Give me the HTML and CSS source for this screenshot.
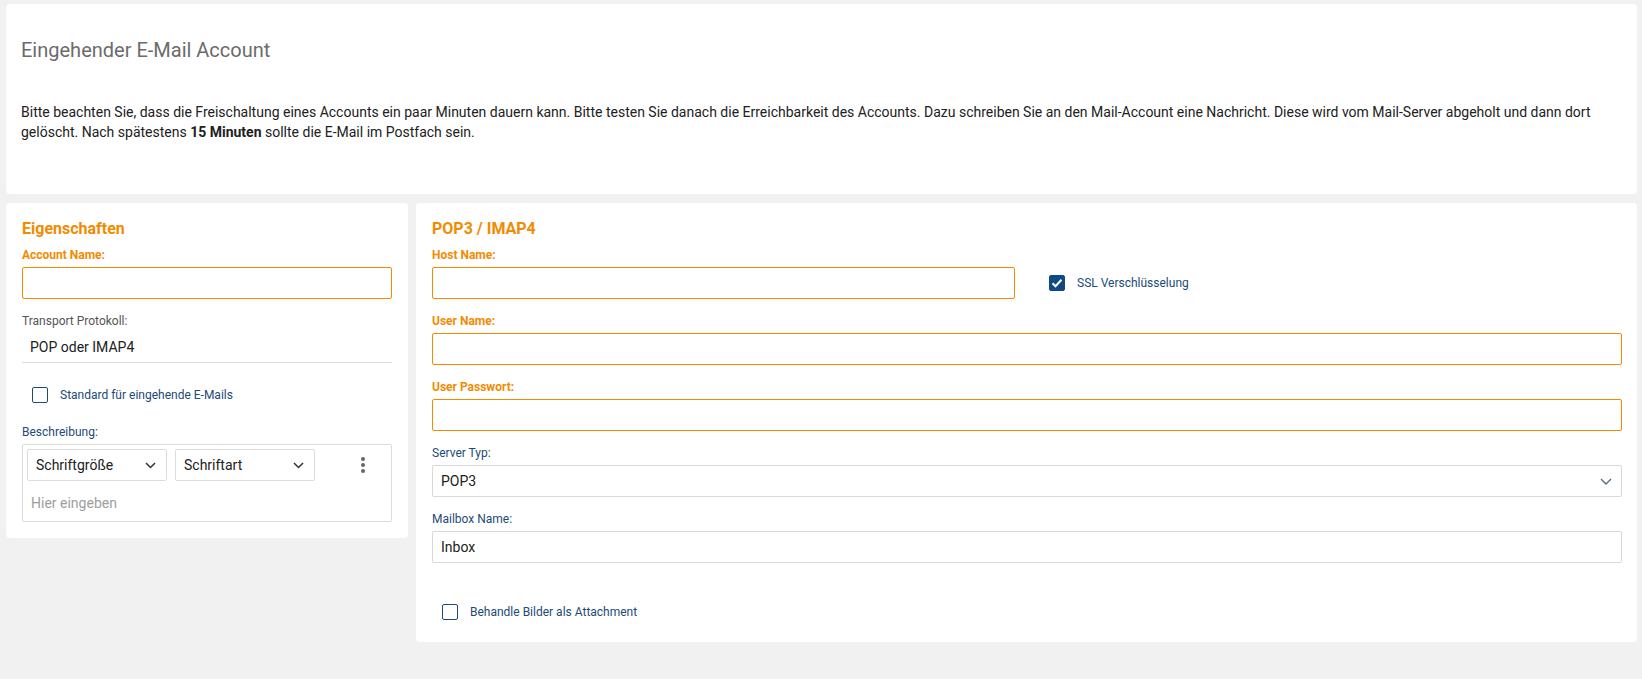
FILE: index.html
```html
<!DOCTYPE html>
<html lang="de">
<head>
<meta charset="utf-8">
<title>Eingehender E-Mail Account</title>
<link rel="stylesheet" href="styles.css">
</head>
<body>
<div class="page">
  <section class="card intro">
    <h1 class="intro-title">Eingehender E-Mail Account</h1>
    <p class="intro-text">Bitte beachten Sie, dass die Freischaltung eines Accounts ein paar Minuten dauern kann. Bitte testen Sie danach die Erreichbarkeit des Accounts. Dazu schreiben Sie an den Mail-Account eine Nachricht. Diese wird vom Mail-Server abgeholt und dann dort gelöscht. Nach spätestens <strong>15 Minuten</strong> sollte die E-Mail im Postfach sein.</p>
  </section>

  <div class="row">
    <section class="card panel panel-left">
      <h2 class="panel-title">Eigenschaften</h2>
      <div class="field">
        <label class="label label-req">Account Name:</label>
        <div class="input input-req"></div>
      </div>
      <div class="field field-static">
        <label class="label label-gray">Transport Protokoll:</label>
        <div class="static-value">POP oder IMAP4</div>
      </div>
      <div class="check-row check-row-left">
        <span class="checkbox"></span>
        <span class="check-label">Standard für eingehende E-Mails</span>
      </div>
      <div class="field field-desc">
        <label class="label label-blue">Beschreibung:</label>
        <div class="editor">
          <div class="editor-toolbar">
            <div class="mini-select"><span>Schriftgröße</span>
              <svg class="chev" width="11" height="7" viewBox="0 0 11 7"><path d="M1 1l4.5 4.5L10 1" fill="none" stroke="#333" stroke-width="1.5"/></svg>
            </div>
            <div class="mini-select"><span>Schriftart</span>
              <svg class="chev" width="11" height="7" viewBox="0 0 11 7"><path d="M1 1l4.5 4.5L10 1" fill="none" stroke="#333" stroke-width="1.5"/></svg>
            </div>
            <div class="more">
              <svg width="4" height="16" viewBox="0 0 4 16"><circle cx="2" cy="2" r="2" fill="#666"/><circle cx="2" cy="8" r="2" fill="#666"/><circle cx="2" cy="14" r="2" fill="#666"/></svg>
            </div>
          </div>
          <div class="editor-body">Hier eingeben</div>
        </div>
      </div>
    </section>

    <section class="card panel panel-right">
      <h2 class="panel-title">POP3 / IMAP4</h2>
      <div class="host-row">
        <div class="field field-host">
          <label class="label label-req">Host Name:</label>
          <div class="input input-req"></div>
        </div>
        <div class="ssl">
          <span class="checkbox checked">
            <svg width="12" height="10" viewBox="0 0 12 10"><path d="M1.5 5.2l3 3L10.5 1.8" fill="none" stroke="#fff" stroke-width="2"/></svg>
          </span>
          <span class="check-label">SSL Verschlüsselung</span>
        </div>
      </div>
      <div class="field">
        <label class="label label-req">User Name:</label>
        <div class="input input-req"></div>
      </div>
      <div class="field">
        <label class="label label-req">User Passwort:</label>
        <div class="input input-req"></div>
      </div>
      <div class="field">
        <label class="label label-blue">Server Typ:</label>
        <div class="input select"><span>POP3</span>
          <svg width="12" height="7" viewBox="0 0 12 7"><path d="M1 1l5 5 5-5" fill="none" stroke="#5b6b7e" stroke-width="1.4"/></svg>
        </div>
      </div>
      <div class="field field-last">
        <label class="label label-blue">Mailbox Name:</label>
        <div class="input">Inbox</div>
      </div>
      <div class="check-row check-row-right">
        <span class="checkbox"></span>
        <span class="check-label">Behandle Bilder als Attachment</span>
      </div>
    </section>
  </div>
</div>
</body>
</html>
```

FILE: styles.css
```css
* { box-sizing: border-box; }

html, body {
  margin: 0;
  padding: 0;
  background: #f1f1f1;
  font-family: Roboto, "Liberation Sans", Arial, sans-serif;
  color: #212121;
}

.page {
  padding: 4px 5px 0 6px;
}

.card {
  background: #fff;
  border-radius: 4px;
}

.intro {
  padding: 34px 16px 52px 15px;
}

.intro-title {
  margin: 0;
  font-size: 20px;
  line-height: 24px;
  font-weight: 400;
  color: #6b6b6b;
}

.intro-text {
  margin: 40px 0 0;
  font-size: 14px;
  line-height: 20px;
  color: #212121;
}

.intro-text strong { font-weight: 700; }

.row {
  display: flex;
  align-items: flex-start;
  gap: 8px;
  margin-top: 9px;
}

.panel {
  padding: 16px 16px 16px 16px;
}

.panel-left {
  width: 402px;
  flex: none;
}

.panel-right {
  flex: 1;
  padding-right: 15px;
  padding-bottom: 22px;
}

.panel-title {
  margin: 0 0 8px;
  font-size: 16px;
  line-height: 20px;
  font-weight: 700;
  color: #f28b00;
}

.field {
  display: flex;
  flex-direction: column;
  margin-bottom: 14px;
}

.label {
  display: block;
  font-size: 12px;
  line-height: 16px;
  margin-bottom: 4px;
}

.label-req { color: #f28b00; font-weight: 700; }
.label-gray { color: #555; margin-bottom: 0; }
.label-blue { color: #1d4a78; }

.input {
  height: 32px;
  border: 1px solid #d9d9d9;
  border-radius: 2px;
  font-size: 14px;
  line-height: 20px;
  padding: 5px 8px;
  color: #212121;
}

.input-req { border-color: #f28b00; }

.select {
  display: flex;
  align-items: center;
  justify-content: space-between;
  padding-right: 9px;
}

.static-value {
  font-size: 14px;
  line-height: 20px;
  padding: 8px 8px 5px;
  border-bottom: 1px solid #dcdcdc;
}

.field-static {
  margin-bottom: 0;
}

.check-row {
  display: flex;
  align-items: center;
  height: 16px;
}

.check-row-left {
  margin: 24px 0 21px 10px;
}

.check-row-right {
  margin: 41px 0 0 10px;
}

.checkbox {
  width: 16px;
  height: 16px;
  border: 1.5px solid #1d4a78;
  border-radius: 2px;
  flex: none;
  display: flex;
  align-items: center;
  justify-content: center;
}

.checkbox.checked {
  background: #0f4a84;
  border-color: #0f4a84;
}

.check-label {
  margin-left: 12px;
  font-size: 12px;
  line-height: 16px;
  color: #1d4a78;
}

.field-desc { margin-bottom: 0; }

.editor {
  border: 1px solid #dcdcdc;
  border-radius: 2px;
}

.editor-toolbar {
  display: flex;
  align-items: center;
  gap: 8px;
  padding: 4px;
}

.mini-select {
  width: 140px;
  height: 32px;
  border: 1px solid #dcdcdc;
  border-radius: 2px;
  display: flex;
  align-items: center;
  justify-content: space-between;
  padding: 0 10px 0 8px;
  font-size: 14px;
  color: #212121;
}

.more {
  margin-left: 38px;
  display: flex;
  align-items: center;
  height: 32px;
}

.editor-body {
  padding: 8px 8px 8px 8px;
  font-size: 14px;
  line-height: 20px;
  color: #9e9e9e;
}

.host-row {
  display: flex;
  align-items: flex-end;
}

.field-host {
  width: 583px;
  flex: none;
}

.ssl {
  display: flex;
  align-items: center;
  height: 32px;
  margin: 0 0 14px 34px;
}

.field-last { margin-bottom: 0; }
```
